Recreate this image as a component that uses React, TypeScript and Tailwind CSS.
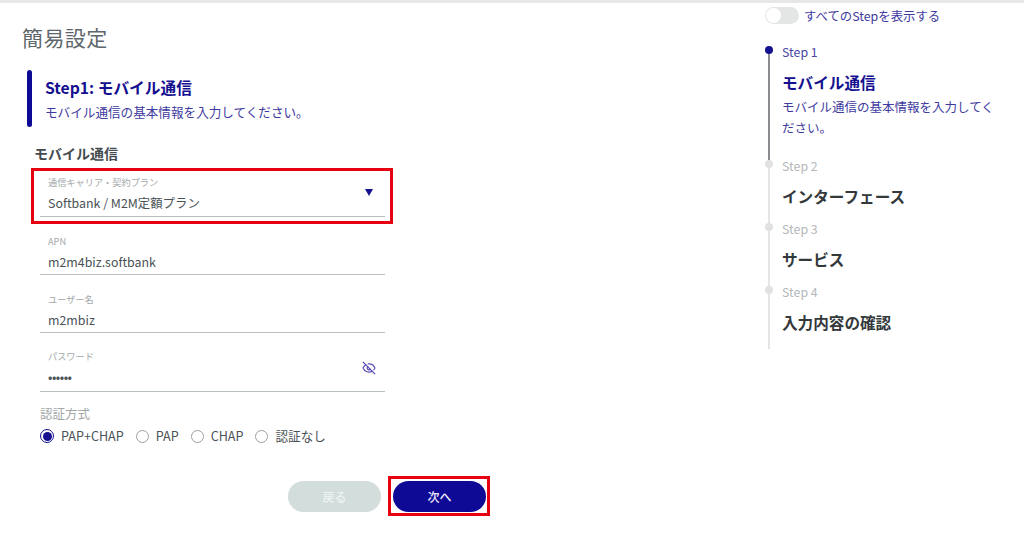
import { EyeOff } from 'lucide-react';

const fontStack = { fontFamily: '"Noto Sans CJK JP", "Noto Sans", sans-serif' };

const fields = [
  { label: 'APN', value: 'm2m4biz.softbank' },
  { label: 'ユーザー名', value: 'm2mbiz' },
];

const radios = [
  { label: 'PAP+CHAP', checked: true },
  { label: 'PAP', checked: false },
  { label: 'CHAP', checked: false },
  { label: '認証なし', checked: false },
];

const steps = [
  { step: 'Step 2', title: 'インターフェース', height: 'h-[63px]' },
  { step: 'Step 3', title: 'サービス', height: 'h-[63px]' },
  { step: 'Step 4', title: '入力内容の確認', height: 'h-[59px]' },
];

function Field({ label, value }: { label: string; value: string }) {
  return (
    <div className="h-[58px] border-b border-[#b9c0c0] pl-2 pt-[17px]">
      <div className="h-[14px] text-[9.2px] leading-[14px] text-[#a3a8aa]">{label}</div>
      <div className="mt-[4px] text-[12.4px] leading-[20px] text-[#4a5256]">{value}</div>
    </div>
  );
}

export default function App() {
  return (
    <div className="relative flex h-[535px] w-[1024px] overflow-hidden bg-white" style={fontStack}>
      <div className="absolute inset-x-0 top-0 h-[3px] bg-[#e6e8e8]" />

      {/* main column */}
      <main className="w-[765px] shrink-0 pl-[22px] pt-[22px]">
        <h1 className="text-[21px] leading-[30px] tracking-[0.4px] text-[#5c666b]">簡易設定</h1>

        <div className="ml-[5px] mt-[18px] flex h-[57px] items-center gap-[13px]">
          <div className="h-[57px] w-[5px] rounded-full bg-[#0f0a96]" />
          <div>
            <h2 className="text-[15.7px] font-bold leading-[24px] text-[#14108f]">Step1: モバイル通信</h2>
            <p className="mt-[2px] text-[12.6px] leading-[20px] text-[#3e3a9e]">モバイル通信の基本情報を入力してください。</p>
          </div>
        </div>

        <h3 className="ml-[12px] mt-[16px] text-[14px] font-bold leading-[20px] text-[#444b4f]">モバイル通信</h3>

        <div className="ml-[18px] mt-[5px] w-[345px]">
          <div className="relative">
            <div className="relative h-[49px] border-b border-[#b9c0c0] pl-2 pt-[7px]">
              <div className="h-[14px] text-[9.2px] leading-[14px] text-[#a3a8aa]">通信キャリア・契約プラン</div>
              <div className="mt-[4px] text-[12.4px] leading-[20px] text-[#4a5256]">Softbank / M2M定額プラン</div>
              <div className="absolute right-[12px] top-[21px] h-0 w-0 border-x-[4px] border-t-[7px] border-x-transparent border-t-[#14108f]" />
            </div>
            <div className="absolute left-[-9px] right-[-8px] top-0 h-[56px] border-[3px] border-[#e60012]" />
          </div>

          {fields.map((f) => (
            <Field key={f.label} label={f.label} value={f.value} />
          ))}

          <div className="relative h-[59px] border-b border-[#b9c0c0] pl-2 pt-[16px]">
            <div className="h-[14px] text-[9.2px] leading-[14px] text-[#a3a8aa]">パスワード</div>
            <div className="mt-[4px] text-[13px] leading-[20px] tracking-[-0.5px] text-[#4a5256]">••••••</div>
            <EyeOff className="absolute right-[9px] top-[28px] h-[14px] w-[14px] text-[#5a50b8]" strokeWidth={2.2} />
          </div>

          <div className="mt-[13px] text-[12.5px] leading-[18px] text-[#a3a8aa]">認証方式</div>
          <div className="mt-[3px] flex h-[20px] items-center gap-[12px]">
            {radios.map((r) => (
              <label key={r.label} className="flex items-center gap-[7px] text-[12.6px] leading-[20px] text-[#4a5256]">
                <span
                  className={
                    r.checked
                      ? 'flex h-[14px] w-[14px] items-center justify-center rounded-full border border-[#14108f]'
                      : 'h-[13px] w-[13px] rounded-full border border-[#9aa0a2]'
                  }
                >
                  {r.checked && <span className="h-[9px] w-[9px] rounded-full bg-[#14108f]" />}
                </span>
                {r.label}
              </label>
            ))}
          </div>
        </div>

        <div className="ml-[266px] mt-[35px] flex w-[198px] gap-[12px]">
          <button className="flex h-[31px] w-[93px] items-center justify-center rounded-full bg-[#d3dddc] text-[12px] font-medium text-[#eef2f2]">
            戻る
          </button>
          <div className="relative">
            <button className="flex h-[31px] w-[93px] items-center justify-center rounded-full bg-[#0f0a96] text-[12px] font-medium text-[#e8e8f6]">
              次へ
            </button>
            <div className="absolute left-[-5px] top-[-5px] h-[40px] w-[102px] border-[3px] border-[#e60012]" />
          </div>
        </div>
      </main>

      {/* step sidebar */}
      <aside className="flex-1 pt-[7px]">
        <div className="flex h-[17px] items-center">
          <div className="relative h-[17px] w-[34px] rounded-full bg-[#e4e6e6]">
            <div className="absolute left-[1px] top-[1px] h-[15px] w-[15px] rounded-full bg-white" />
          </div>
          <span className="ml-[5px] mt-[1px] text-[12.4px] text-[#3e3a9e]">すべてのStepを表示する</span>
        </div>

        <div className="ml-[3px] mt-[26px]">
          <div className="relative flow-root h-[114px] border-l-2 border-[#8a8c90] pl-[12px]">
            <div className="absolute left-[-5px] top-[-4px] h-[8px] w-[8px] rounded-full bg-[#14108f]" />
            <div className="-mt-[7px] text-[12.4px] leading-[18px] text-[#4a46a5]">Step 1</div>
            <div className="mt-[10px] text-[15.6px] font-bold leading-[22px] text-[#14108f]">モバイル通信</div>
            <p className="mt-[3px] w-[220px] text-[12.5px] leading-[21px] text-[#3e3a9e]">モバイル通信の基本情報を入力してください。</p>
          </div>
          {steps.map((s) => (
            <div key={s.step} className={`relative flow-root border-l-2 border-[#e4e6e6] pl-[12px] ${s.height}`}>
              <div className="absolute left-[-5px] top-[-4px] h-[8px] w-[8px] rounded-full bg-[#e0e2e2]" />
              <div className="-mt-[7px] text-[12.4px] leading-[18px] text-[#b4b8ba]">{s.step}</div>
              <div className="mt-[10px] text-[15.6px] font-bold leading-[22px] text-[#33383b]">{s.title}</div>
            </div>
          ))}
        </div>
      </aside>
    </div>
  );
}
